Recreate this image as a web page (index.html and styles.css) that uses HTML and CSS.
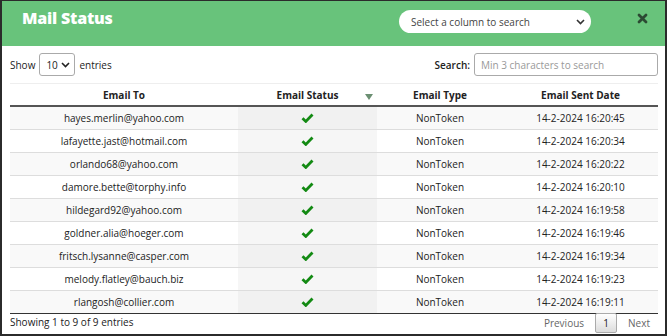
FILE: index.html
```html
<!DOCTYPE html>
<html lang="en">

<head>
  <meta charset="UTF-8" />
  <meta name="viewport" content="width=device-width, initial-scale=1.0" />
  <title>Mail Status</title>
  <link rel="stylesheet" href="styles.css">
</head>

<body>
  <section class="modal">
    <div class="modal-head">
      <h1>Mail Status</h1>
      <div class="col-select">
        <span>Select a column to search</span>
        <svg width="9" height="6" viewBox="0 0 9 6"><path d="M1 1l3.5 3.5L8 1" fill="none" stroke="#333" stroke-width="1.6"/></svg>
      </div>
      <svg class="close" width="11" height="11" viewBox="0 0 11 11"><path d="M2 2l7 7M9 2l-7 7" stroke="#2c4a33" stroke-width="2.8" stroke-linecap="round"/></svg>
    </div>

    <div class="modal-body">
      <div class="toolbar">
        <div class="length">
          <span>Show</span>
          <div class="len-select">
            <span>10</span>
            <svg width="9" height="6" viewBox="0 0 9 6"><path d="M1 1l3.5 3.5L8 1" fill="none" stroke="#222" stroke-width="1.6"/></svg>
          </div>
          <span>entries</span>
        </div>
        <div class="search">
          <span>Search:</span>
          <input type="text" placeholder="Min 3 characters to search">
        </div>
      </div>

      <table class="mail-table">
        <thead>
          <tr>
            <th class="c1">Email To</th>
            <th class="c2">Email Status<span class="sort"></span></th>
            <th class="c3">Email Type</th>
            <th class="c4">Email Sent Date</th>
          </tr>
        </thead>
        <tbody class="rows"></tbody>
      </table>

      <div class="footer">
        <div class="info">Showing 1 to 9 of 9 entries</div>
        <div class="paging">
          <span>Previous</span>
          <span class="page">1</span>
          <span>Next</span>
        </div>
      </div>
    </div>
  </section>

  <script>
    const mails = [
      ["hayes.merlin@yahoo.com", "14-2-2024 16:20:45"],
      ["lafayette.jast@hotmail.com", "14-2-2024 16:20:34"],
      ["orlando68@yahoo.com", "14-2-2024 16:20:22"],
      ["damore.bette@torphy.info", "14-2-2024 16:20:10"],
      ["hildegard92@yahoo.com", "14-2-2024 16:19:58"],
      ["goldner.alia@hoeger.com", "14-2-2024 16:19:46"],
      ["fritsch.lysanne@casper.com", "14-2-2024 16:19:34"],
      ["melody.flatley@bauch.biz", "14-2-2024 16:19:23"],
      ["rlangosh@collier.com", "14-2-2024 16:19:11"]
    ];
    const check = '<svg width="13" height="10" viewBox="0 0 13 10"><path d="M1.5 5.2l3.3 3.2L11.5 1.5" fill="none" stroke="#138a13" stroke-width="2.8"/></svg>';
    const rows = document.querySelector(".rows");
    mails.forEach(function (m) {
      rows.innerHTML += `<tr><td>${m[0]}</td><td class="status">${check}</td><td>NonToken</td><td>${m[1]}</td></tr>`;
    });
  </script>
</body>

</html>
```

FILE: styles.css
```css
* {
  box-sizing: border-box;
}

body {
  margin: 0;
  padding: 0;
  font-family: "Open Sans", "Liberation Sans", sans-serif;
  color: #222;
}

.modal {
  width: 667px;
  height: 336px;
  border: 2px solid #2b2b2b;
  border-top-width: 1px;
  background-color: #ffffff;
  display: flex;
  flex-direction: column;
}

.modal-head {
  height: 45px;
  background-color: #68c37b;
  display: flex;
  align-items: flex-start;
  padding: 7px 17px 0 20px;
}

.modal-head h1 {
  margin: 0;
  font-size: 16px;
  line-height: 21px;
  font-weight: 800;
  color: #ffffff;
  letter-spacing: -0.2px;
}

.col-select {
  margin: 2px 0 0 auto;
  width: 192px;
  height: 23px;
  background-color: #ffffff;
  border-radius: 12px;
  display: flex;
  align-items: center;
  justify-content: space-between;
  padding: 0 6px 0 12px;
  font-size: 10px;
  color: #444;
}

.close {
  margin: 5px 0 0 46px;
}

.modal-body {
  flex: 1;
  padding: 0 7px 0 8px;
  font-size: 10px;
}

.toolbar {
  display: flex;
  justify-content: space-between;
  align-items: center;
  padding: 7px 0 7px;
  border-bottom: 1px solid #eeeeee;
}

.length,
.search {
  display: flex;
  align-items: center;
  gap: 4px;
}

.len-select {
  width: 36px;
  height: 23px;
  border: 1px solid #aaa;
  border-radius: 3px;
  display: flex;
  align-items: center;
  justify-content: space-between;
  padding: 0 4px 0 6px;
}

.search span {
  font-weight: 600;
}

.search input {
  width: 184px;
  height: 23px;
  border: 1px solid #aaa;
  border-radius: 3px;
  padding: 0 6px;
  font-family: inherit;
  font-size: 10px;
  outline: none;
}

.search input::placeholder {
  color: #999;
}

.mail-table {
  width: 100%;
  border-collapse: collapse;
  table-layout: fixed;
  border-bottom: 1px solid #333;
}

.mail-table th {
  font-weight: 700;
  line-height: 14px;
  padding: 4px 10px 3px;
  border-bottom: 2px solid #555;
  position: relative;
}

.c1 { width: 228px; }
.c2 { width: 139px; }
.c3 { width: 126px; }

.sort {
  position: absolute;
  right: 4px;
  top: 10px;
  border-left: 4px solid transparent;
  border-right: 4px solid transparent;
  border-top: 6px solid #6b8f72;
}

.mail-table td {
  text-align: center;
  line-height: 14px;
  padding: 4px 10px;
  border-top: 1px solid #dddddd;
}

.mail-table tbody tr:first-child td {
  border-top: none;
}

.mail-table tbody tr:nth-child(odd) {
  background-color: #f9f9f9;
}

.mail-table td.status {
  background-color: #f1f1f1;
}

.mail-table tbody tr:nth-child(even) td.status {
  background-color: #f6f6f6;
}

.status svg {
  display: block;
  margin: 0 auto;
}

.footer {
  display: flex;
  justify-content: space-between;
  align-items: flex-start;
}

.info {
  line-height: 14px;
  padding-top: 1px;
}

.paging {
  display: flex;
  align-items: center;
  gap: 11px;
  color: #666;
  padding-right: 8px;
  margin-top: -1px;
}

.page {
  width: 22px;
  height: 20px;
  border: 1px solid #aaa;
  border-radius: 2px;
  background: linear-gradient(#ffffff, #dcdcdc);
  color: #222;
  display: flex;
  align-items: center;
  justify-content: center;
}
```
